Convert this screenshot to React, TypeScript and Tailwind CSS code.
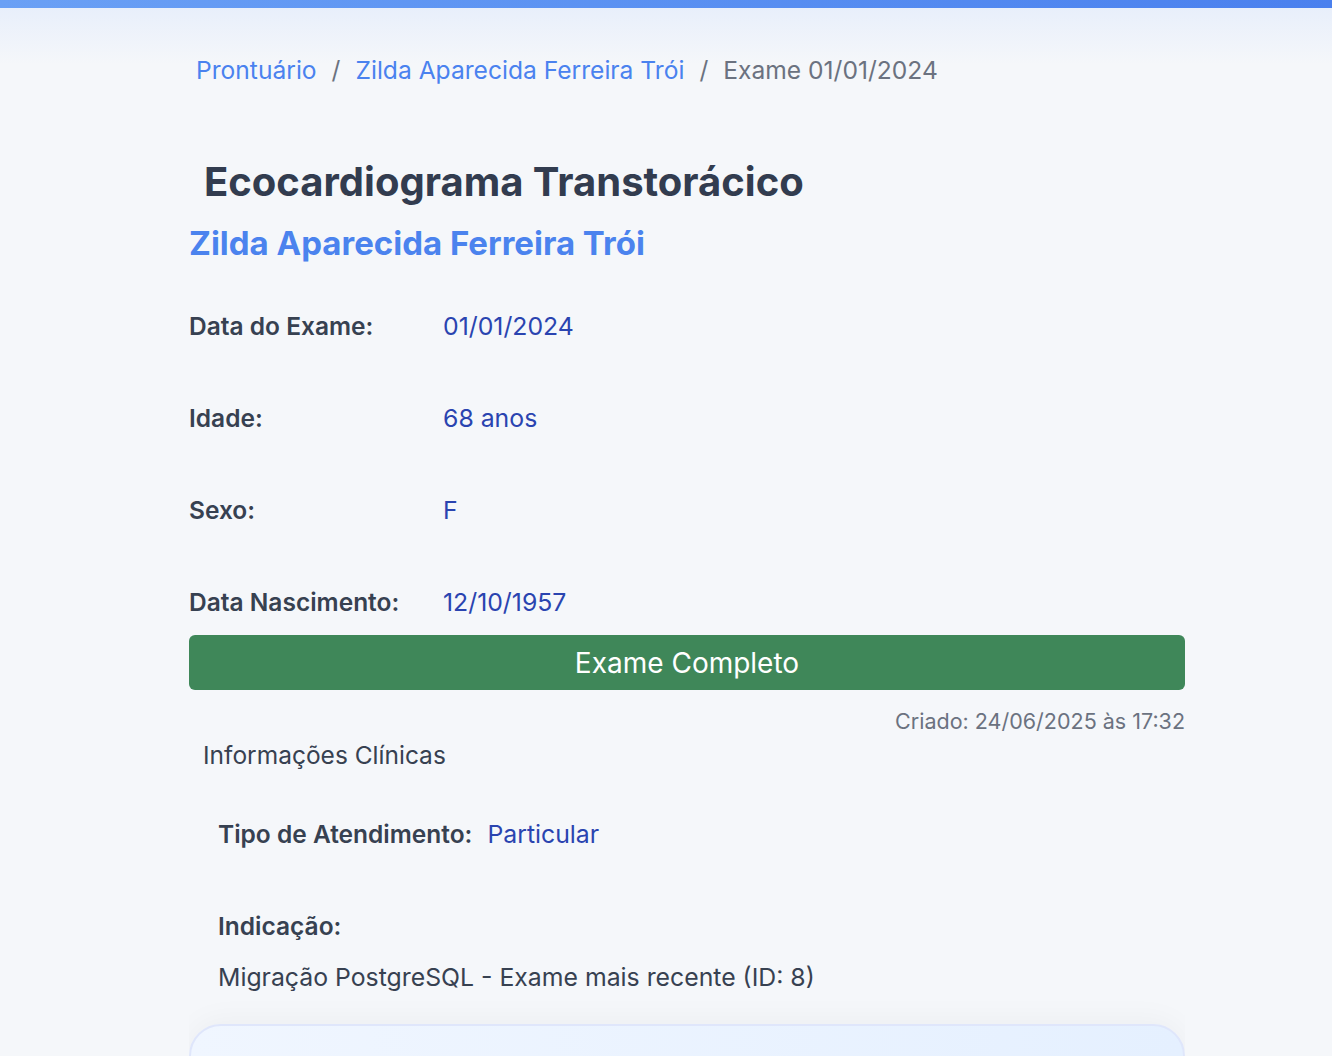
import React from "react"

const patient = {
  name: "Zilda Aparecida Ferreira Trói",
  rows: [
    { label: "Data do Exame:", value: "01/01/2024" },
    { label: "Idade:", value: "68 anos" },
    { label: "Sexo:", value: "F" },
    { label: "Data Nascimento:", value: "12/10/1957" },
  ],
}

export default function App() {
  return (
    <div
      className="min-h-screen bg-[linear-gradient(to_bottom,#e8effb_8px,#f5f7fa_64px)] text-[#374151]"
      style={{ fontFamily: "Inter, 'Noto Sans', sans-serif" }}
    >
      {/* top accent bar */}
      <div className="h-[8px] bg-gradient-to-r from-[#6aa0f5] to-[#4a80ee]" />

      <div className="w-[996px] ml-[189px] overflow-hidden h-[1048px]">
        {/* Breadcrumb */}
        <nav className="flex items-center pt-[44px] pl-[7px] text-[24.6px] leading-[36px]">
          <a className="text-[#4a82ef]">Prontuário</a>
          <span className="mx-[15px] text-[#6b7280]">/</span>
          <a className="text-[#4a82ef]">{patient.name}</a>
          <span className="mx-[15px] text-[#6b7280]">/</span>
          <span className="text-[#6b7280]">Exame 01/01/2024</span>
        </nav>

        {/* Header */}
        <h1 className="mt-[72px] pl-[15px] text-[40px] leading-[44px] font-bold text-[#323c4f]">
          Ecocardiograma Transtorácico
        </h1>
        <h2 className="mt-[20px] text-[33px] leading-[38px] font-bold text-[#4b83ee]">
          {patient.name}
        </h2>

        {/* Patient info */}
        <div className="mt-[46px] flex flex-col gap-[56px]">
          {patient.rows.map((r) => (
            <div key={r.label} className="flex leading-[36px]">
              <span className="w-[254px] text-[24.5px] font-semibold text-[#374151]">{r.label}</span>
              <span className="text-[24.8px] text-[#2a44b0]">{r.value}</span>
            </div>
          ))}
        </div>

        <button className="mt-[15px] w-full h-[55px] rounded-[6px] bg-[#3f8759] text-white text-[28px]">
          Exame Completo
        </button>

        <p className="mt-[17px] text-right text-[21.5px] leading-[28px] text-[#6b7280]">
          Criado: 24/06/2025 às 17:32
        </p>

        {/* Clinical info */}
        <h3 className="mt-[4px] pl-[14px] text-[24.5px] leading-[32px] text-[#374151]">
          Informações Clínicas
        </h3>

        <div className="pl-[29px]">
          <div className="mt-[45px] flex leading-[36px]">
            <span className="text-[24.5px] font-semibold">Tipo de Atendimento:</span>
            <span className="ml-[15px] text-[24.8px] text-[#2a44b0]">Particular</span>
          </div>
          <div className="mt-[56px] text-[24.5px] leading-[36px] font-semibold">Indicação:</div>
          <p className="mt-[15px] text-[24.8px] leading-[36px]">
            Migração PostgreSQL - Exame mais recente (ID: 8)
          </p>
        </div>

        <div className="mt-[29px] h-[200px] rounded-[32px] border-2 border-[#dfe6fb] bg-gradient-to-r from-[#f0f6ff] to-[#e5f0ff] shadow-[0_-4px_30px_rgba(0,0,0,0.04)]" />
      </div>
    </div>
  )
}
